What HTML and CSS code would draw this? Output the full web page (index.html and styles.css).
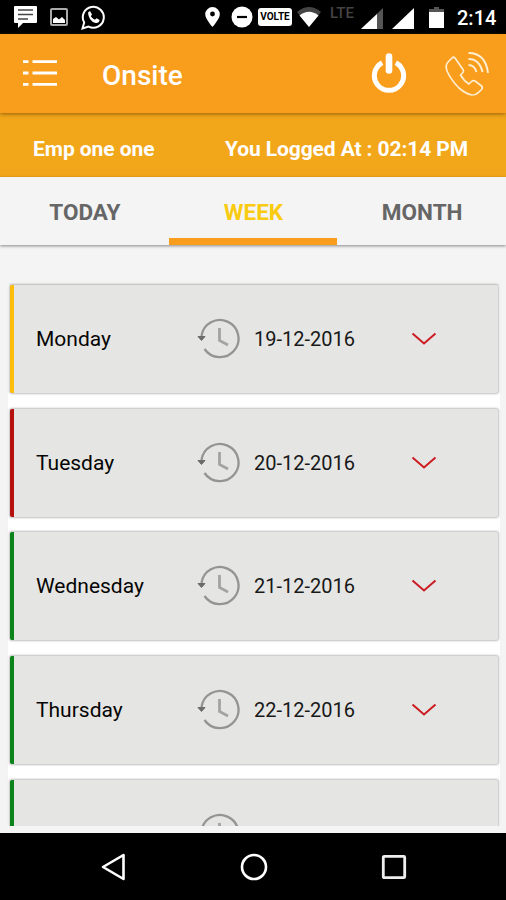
FILE: index.html
```html
<!DOCTYPE html>
<html lang="en">
<head>
<meta charset="utf-8">
<title>Onsite</title>
<link rel="stylesheet" href="styles.css">
</head>
<body>
<svg class="defs" aria-hidden="true">
  <symbol id="history" viewBox="0 0 44 44">
    <path d="M4.500 19a18.600 18.600 0 1 1 3 13" fill="none" stroke="#949494" stroke-width="2.300"/>
    <path d="M1 19.500h7l-3.500 4z" fill="#6c6c6c" stroke="#6c6c6c" stroke-linejoin="round"/>
    <path d="M22.500 11v12.500l8.500 4.500" fill="none" stroke="#a3a3a3" stroke-width="2.800"/>
  </symbol>
  <symbol id="chevron" viewBox="0 0 26 14">
    <path d="M1.500 1.500L13 11.500 24.500 1.500" fill="none" stroke="#cb1c22" stroke-width="2"/>
  </symbol>
</svg>
<div class="phone">
  <header class="status">
    <div class="notices">
      <svg width="23" height="23" viewBox="0 0 23 23"><path d="M1 0h21q1 0 1 1v15q0 1-1 1H9l-5 5v-5H1q-1 0-1-1V1q0-1 1-1z" fill="#fff"/><path d="M4 4h15M4 8.500h15M4 13h10" stroke="#444" stroke-width="1.600"/></svg>
      <svg width="18" height="18" viewBox="0 0 18 18"><rect x="1" y="1" width="16" height="16" rx="1" fill="none" stroke="#aaa" stroke-width="2"/><path d="M3 15v-4l3-2 3 2.500 3-2.500 3 3v3z" fill="#fff"/></svg>
      <svg width="24" height="25" viewBox="0 0 24 25"><path d="M1.500 23.500l1.700-6A10.500 10.500 0 1 1 7.500 21.600z" fill="none" stroke="#fff" stroke-width="2"/><path d="M7 7.500l2-1.500 2 3.500-1.200 1.800q1.500 2.400 4 3.500l1.800-1.500 3 1.700q-.5 3.500-4 3-7-1.800-7.600-10.500z" fill="#fff"/></svg>
    </div>
    <div class="system">
      <svg class="pin" width="15" height="20" viewBox="0 0 15 20"><path d="M7.500 0A7.300 7.300 0 0 0 .2 7.300C.2 12 7.500 20 7.500 20s7.300-8 7.300-12.700A7.300 7.300 0 0 0 7.500 0z" fill="#fff"/><circle cx="7.500" cy="7" r="2.400"/></svg>
      <svg class="dnd" width="22" height="22" viewBox="0 0 22 22"><circle cx="11" cy="11" r="10.500" fill="#fff"/><path d="M6 11h10" stroke="#000" stroke-width="2.200"/></svg>
      <span class="volte">VOLTE</span>
      <svg class="wifi" width="24" height="20" viewBox="0 0 24 20"><path d="M0 5Q12-5 24 5L12 20z" fill="#444"/><path d="M2.500 8.500q9.500-7.500 19 0L12 20z" fill="#fff"/></svg>
      <span class="lte">LTE</span>
      <svg class="signal" width="22" height="21" viewBox="0 0 22 21"><path d="M22 0v21H0z" fill="#555"/><path d="M16 6v15H0z" fill="#fff"/></svg>
      <svg class="signal2" width="22" height="21" viewBox="0 0 22 21"><path d="M22 0v21H0z" fill="#fff"/></svg>
      <svg class="battery" width="15" height="21" viewBox="0 0 15 21"><path d="M5 0h5v2h5v5H0V2h5z" fill="#555"/><path d="M0 5h15v16H0z" fill="#fff"/></svg>
      <span class="time">2:14</span>
    </div>
  </header>
  <div class="appbar">
    <svg class="menu" width="34" height="28" viewBox="0 0 34 28"><path d="M0 2.700h5.500M9.500 2.700H34M0 14h5.500M9.500 14H34M0 25.300h5.500M9.500 25.300H34" stroke="#fff" stroke-width="2.800"/></svg>
    <h1>Onsite</h1>
    <svg class="power" width="36" height="41" viewBox="0 0 36 41"><path d="M11.200 9.800A14.600 14.600 0 1 0 24.800 9.800" fill="none" stroke="#fff" stroke-width="5"/><path d="M18 3.500v14" stroke="#fff" stroke-width="6.600" stroke-linecap="round"/></svg>
    <svg class="call" width="46" height="46" viewBox="0 0 46 46" fill="none" stroke="#ffedcf" stroke-width="1.700" stroke-linejoin="round"><path d="M8 7L4 11Q1 14 3 20q4 9 12 17 7 6 13 7 4 0 7-3l3-3q1-2-1-3.500l-6-4.500q-2-1-3.500.5l-2.500 2.500q-5-3-8.500-9l2.500-2.500q1-1.500 0-3L11 7q-1.500-1.500-3 0z"/><path d="M24.500 2q17 0 19.500 20M24.500 8q11 0 14 13M24.500 14q6 0 8 7" stroke-width="2"/></svg>
  </div>
  <div class="session">
    <span>Emp one one</span>
    <span>You Logged At : 02:14 PM</span>
  </div>
  <nav class="tabs">
    <a class="tab">TODAY</a>
    <a class="tab active">WEEK</a>
    <a class="tab">MONTH</a>
  </nav>
  <main class="content">
    <ul class="days">
      <li class="day amber"><span class="name">Monday</span><svg class="history"><use href="#history"/></svg><span class="date">19-12-2016</span><svg class="chevron"><use href="#chevron"/></svg></li>
      <li class="day red"><span class="name">Tuesday</span><svg class="history"><use href="#history"/></svg><span class="date">20-12-2016</span><svg class="chevron"><use href="#chevron"/></svg></li>
      <li class="day green"><span class="name">Wednesday</span><svg class="history"><use href="#history"/></svg><span class="date">21-12-2016</span><svg class="chevron"><use href="#chevron"/></svg></li>
      <li class="day green"><span class="name">Thursday</span><svg class="history"><use href="#history"/></svg><span class="date">22-12-2016</span><svg class="chevron"><use href="#chevron"/></svg></li>
      <li class="day green"><span class="name">Friday</span><svg class="history"><use href="#history"/></svg><span class="date"></span><svg class="chevron"><use href="#chevron"/></svg></li>
    </ul>
  </main>
  <footer class="navbar">
    <svg width="26" height="28" viewBox="0 0 26 28"><path d="M22.500 2v24L2 14z" fill="none" stroke="#fff" stroke-width="2.600" stroke-linejoin="round"/></svg>
    <svg width="28" height="28" viewBox="0 0 28 28"><circle cx="14" cy="14" r="12" fill="none" stroke="#fff" stroke-width="2.600"/></svg>
    <svg width="26" height="26" viewBox="0 0 26 26"><rect x="2.300" y="2.300" width="21.400" height="21.400" rx="1" fill="none" stroke="#eee" stroke-width="2.800"/></svg>
  </footer>
</div>
</body>
</html>
```
FILE: styles.css
```css
* { box-sizing: border-box; }
body { margin: 0; font-family: Roboto, "Liberation Sans", sans-serif; }
svg { display: block; flex: none; }
.defs { display: none; }
.phone {
  width: 506px;
  height: 900px;
  display: flex;
  flex-direction: column;
  overflow: hidden;
  background: #f4f4f4;
}
.status {
  flex: none;
  height: 34px;
  background: #000;
  color: #fff;
  display: flex;
  justify-content: space-between;
  padding: 0 10px 0 14px;
}
.notices { display: flex; align-items: center; gap: 13px; }
.system { display: flex; align-items: center; }
.dnd { margin-left: 11px; }
.volte {
  margin-left: 5px;
  width: 34px;
  height: 18px;
  border-radius: 3px;
  background: #fff;
  color: #000;
  font-size: 10px;
  font-weight: 700;
  line-height: 18px;
  text-align: center;
}
.wifi { margin: 0 0 0 5px; }
.lte {
  width: 25px;
  margin: 0 6px 8px 9px;
  color: #444;
  font-size: 15px;
  font-weight: 500;
  line-height: 18px;
}
.signal, .signal2 { margin-top: 2px; }
.signal2 { margin-left: 9px; }
.battery { margin-left: 15px; }
.time {
  width: 39px;
  margin: 2px 0 0 13px;
  font-size: 20px;
  font-weight: 500;
  letter-spacing: 0;
}
.appbar {
  flex: none;
  height: 79px;
  background: #f99d1c;
  display: flex;
  align-items: center;
  padding: 0 16px 0 23px;
  position: relative;
  box-shadow: 0 1px 4px rgba(90, 60, 0, .65);
}
.menu { margin-bottom: 1px; }
.appbar h1 {
  flex: 1;
  margin: 3px 0 0 45px;
  color: #fff;
  font-size: 28px;
  font-weight: 500;
}
.power { margin-right: 37px; }
.session {
  flex: none;
  height: 64px;
  padding: 8px 38px 0 33px;
  background: #f2a61a;
  color: #fff;
  display: flex;
  align-items: center;
  justify-content: space-between;
  font-size: 21px;
  font-weight: 700;
  letter-spacing: -.06px;
}
.session span:last-child { letter-spacing: -.1px; }
.tabs {
  flex: none;
  height: 68px;
  display: grid;
  grid-template-columns: repeat(3, 1fr);
  position: relative;
  background: #f4f4f4;
  box-shadow: 0 1px 3px rgba(0, 0, 0, .45);
}
.tab {
  display: flex;
  align-items: center;
  justify-content: center;
  padding: 8px 0 0 1px;
  border-bottom: 7px solid transparent;
  color: #666;
  font-size: 22.500px;
  font-weight: 700;
}
.tab.active { color: #f9cb13; border-bottom-color: #f99d1c; }
.content { height: 581px; padding: 40px 6px 0 8px; overflow: hidden; }
.days {
  margin: 0;
  padding: 0 2px;
  list-style: none;
  display: flex;
  flex-direction: column;
  gap: 15.700px;
  background: #fff;
}
.day {
  flex: none;
  height: 108px;
  display: flex;
  align-items: center;
  padding-left: 22px;
  border-left: 4px solid;
  border-radius: 2px;
  background: #e5e5e3;
  box-shadow: 0 0 2px 1px rgba(0, 0, 0, .25);
}
.amber { border-left-color: #ffbd0b; }
.red { border-left-color: #b5120d; }
.green { border-left-color: #0b8419; }
.name { width: 161px; color: #050505; font-size: 21px; }
.history { width: 44px; height: 44px; }
.date { width: 101px; margin-left: 13px; color: #181818; font-size: 20px; }
.chevron { width: 26px; height: 14px; margin-left: 56px; }
.navbar {
  flex: none;
  height: 67px;
  margin-top: 7px;
  padding: 0 99px 0 101px;
  background: #000;
  display: flex;
  align-items: center;
  justify-content: space-between;
}
```
